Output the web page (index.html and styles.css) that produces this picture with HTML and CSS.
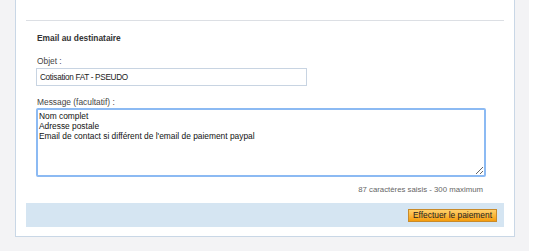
FILE: index.html
```html
<!DOCTYPE html>
<html lang="fr">
<head>
    <meta charset="UTF-8">
    <meta name="viewport" content="width=device-width, initial-scale=1.0">
    <title>Paiement</title>
    <link rel="stylesheet" href="styles.css">
</head>
<body>
    <div class="page">
        <div class="panel">
            <div class="section">
                <h3 class="title">Email au destinataire</h3>

                <label class="label" for="objet">Objet :</label>
                <input class="field" id="objet" type="text" value="Cotisation FAT - PSEUDO">

                <label class="label label-msg" for="message">Message (facultatif) :</label>
                <textarea class="message" id="message">Nom complet
Adresse postale
Email de contact si différent de l'email de paiement paypal</textarea>

                <div class="counter">87 caractères saisis - 300 maximum</div>
            </div>

            <div class="actions">
                <button class="pay">Effectuer le paiement</button>
            </div>
        </div>
    </div>
</body>
</html>
```

FILE: styles.css
```css
body {
    margin: 0;
    background-color: #fff;
    font-family: 'Liberation Sans', Arial, sans-serif;
    font-size: 8.4px;
    color: #222;
}

.page {
    width: 514px;
    height: 251px;
    padding-left: 15px;
    background-color: #f3f3f5;
}

.panel {
    width: 478px;
    padding: 20px 10px 9px 10px;
    background-color: #fff;
    border-left: 1px solid #c9d7e6;
    border-right: 1px solid #c9d7e6;
    border-bottom: 1px solid #c9d7e6;
}

.section {
    display: flex;
    flex-direction: column;
    align-items: flex-start;
    padding: 0 11px 0 10px;
    border-top: 1px solid #dcdfe4;
}

.title {
    margin: 11px 0 0 1px;
    font-size: 8.4px;
    line-height: 13px;
    font-weight: bold;
    color: #333;
}

.label {
    margin: 10px 0 0 1px;
    line-height: 13px;
    color: #444;
}

.label-msg {
    line-height: 12px;
}

.field {
    box-sizing: border-box;
    width: 271px;
    height: 18px;
    margin: 0;
    padding: 0 3px;
    border: 1px solid #c8d4e2;
    font-family: inherit;
    font-size: 8.2px;
    letter-spacing: -0.3px;
    color: #222;
    outline: none;
}

.message {
    box-sizing: border-box;
    width: 450px;
    height: 69px;
    margin: 0;
    padding: 1px;
    border: 2px solid #8cbaf3;
    border-radius: 2px;
    font-family: inherit;
    font-size: 8.4px;
    line-height: 10px;
    color: #111;
    outline: none;
    resize: both;
}

.counter {
    align-self: stretch;
    margin-top: 7px;
    padding-right: 10px;
    text-align: right;
    font-size: 7.8px;
    line-height: 12px;
    color: #666;
}

.actions {
    display: flex;
    justify-content: flex-end;
    align-items: center;
    height: 24px;
    margin-top: 7px;
    padding-right: 7px;
    background-color: #d5e5f2;
}

.pay {
    height: 13px;
    padding: 0 4px;
    border: 1px solid #c98a2a;
    background: linear-gradient(#ffd06a, #f59d0e);
    font-family: inherit;
    font-size: 8.4px;
    line-height: 11px;
    color: #222;
    cursor: pointer;
}
```
